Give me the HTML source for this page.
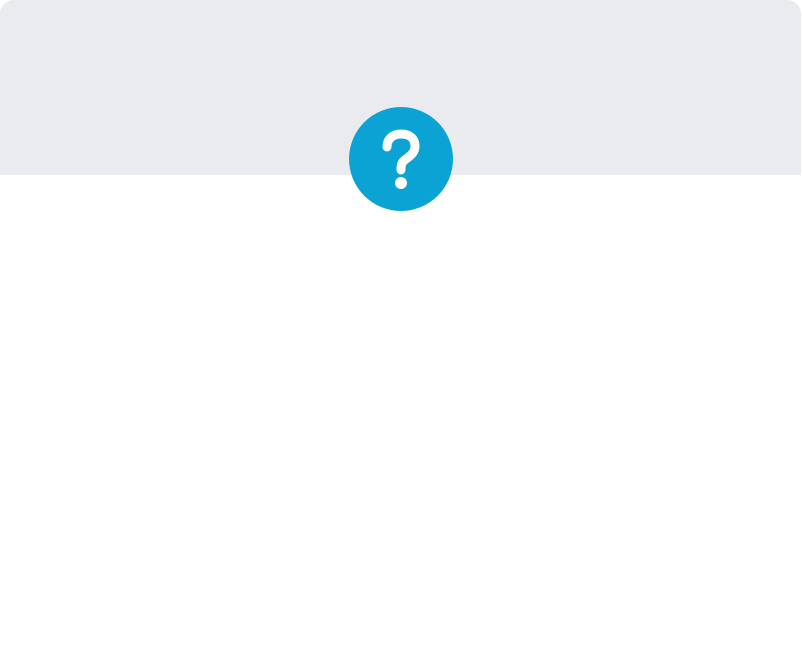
<!DOCTYPE html>
<html><head><style>
html,body{margin:0;padding:0;background:#fff;width:802px;height:653px;overflow:hidden}
.top{position:absolute;left:0;top:0;width:801px;height:175px;background:#e9ebef;border-radius:14px 14px 0 0}
.c{position:absolute;left:349px;top:107px;width:104px;height:104px;border-radius:50%;background:#0aa3d3}
</style></head><body>
<div class="top"></div>
<div class="c">
<svg width="104" height="104" viewBox="0 0 104 104">
<path d="M38 40 C38 31 45 27 52 27 C61 27 66 32 66 39 C66 46 61 49 57 52 C53 55 52 57 52 62 L52 63" fill="none" stroke="#fff" stroke-width="9" stroke-linecap="round" stroke-linejoin="round"/>
<circle cx="52" cy="76" r="6" fill="#fff"/>
</svg>
</div>
</body></html>
